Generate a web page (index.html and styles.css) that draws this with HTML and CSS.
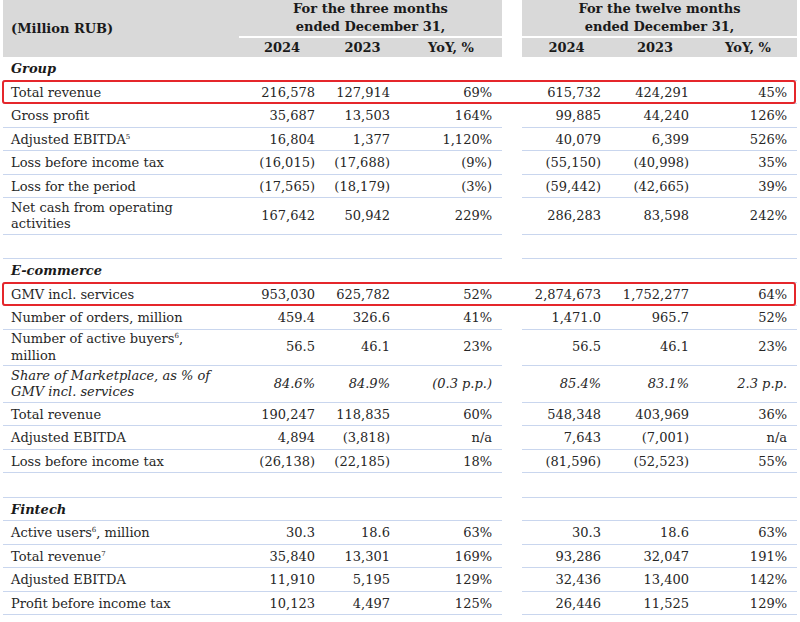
FILE: index.html
```html
<!DOCTYPE html>
<html>
<head>
<meta charset="utf-8">
<link rel="stylesheet" href="styles.css">
</head>
<body>
<table class="fin">
  <colgroup>
    <col class="c-label"><col class="c-a"><col class="c-b"><col class="c-c"><col class="c-gap"><col class="c-d"><col class="c-e"><col class="c-f">
  </colgroup>
  <thead>
    <tr class="h1">
      <th rowspan="2" class="unit">(Million RUB)</th>
      <th colspan="3" class="period">For the three months<br>ended December 31,</th>
      <th rowspan="2" class="gap"></th>
      <th colspan="3" class="period">For the twelve months<br>ended December 31,</th>
    </tr>
    <tr class="h2">
      <th>2024</th><th>2023</th><th>YoY, %</th>
      <th>2024</th><th>2023</th><th>YoY, %</th>
    </tr>
  </thead>
  <tbody>
    <tr class="section"><td>Group</td><td></td><td></td><td></td><td class="gap"></td><td></td><td></td><td></td></tr>
    <tr><td class="hl">Total revenue</td><td>216,578</td><td>127,914</td><td>69%</td><td class="gap"></td><td>615,732</td><td>424,291</td><td>45%</td></tr>
    <tr><td>Gross profit</td><td>35,687</td><td>13,503</td><td>164%</td><td class="gap"></td><td>99,885</td><td>44,240</td><td>126%</td></tr>
    <tr><td>Adjusted EBITDA<sup>5</sup></td><td>16,804</td><td>1,377</td><td>1,120%</td><td class="gap"></td><td>40,079</td><td>6,399</td><td>526%</td></tr>
    <tr><td>Loss before income tax</td><td>(16,015)</td><td>(17,688)</td><td>(9%)</td><td class="gap"></td><td>(55,150)</td><td>(40,998)</td><td>35%</td></tr>
    <tr><td>Loss for the period</td><td>(17,565)</td><td>(18,179)</td><td>(3%)</td><td class="gap"></td><td>(59,442)</td><td>(42,665)</td><td>39%</td></tr>
    <tr class="tall"><td>Net cash from operating<br>activities</td><td>167,642</td><td>50,942</td><td>229%</td><td class="gap"></td><td>286,283</td><td>83,598</td><td>242%</td></tr>
    <tr class="blank"><td></td><td></td><td></td><td></td><td class="gap"></td><td></td><td></td><td></td></tr>
    <tr class="section"><td>E-commerce</td><td></td><td></td><td></td><td class="gap"></td><td></td><td></td><td></td></tr>
    <tr><td class="hl">GMV incl. services</td><td>953,030</td><td>625,782</td><td>52%</td><td class="gap"></td><td>2,874,673</td><td>1,752,277</td><td>64%</td></tr>
    <tr><td>Number of orders, million</td><td>459.4</td><td>326.6</td><td>41%</td><td class="gap"></td><td>1,471.0</td><td>965.7</td><td>52%</td></tr>
    <tr class="tall"><td>Number of active buyers<sup>6</sup>,<br>million</td><td>56.5</td><td>46.1</td><td>23%</td><td class="gap"></td><td>56.5</td><td>46.1</td><td>23%</td></tr>
    <tr class="tall ital"><td>Share of Marketplace, as % of<br>GMV incl. services</td><td>84.6%</td><td>84.9%</td><td>(0.3 p.p.)</td><td class="gap"></td><td>85.4%</td><td>83.1%</td><td>2.3 p.p.</td></tr>
    <tr><td>Total revenue</td><td>190,247</td><td>118,835</td><td>60%</td><td class="gap"></td><td>548,348</td><td>403,969</td><td>36%</td></tr>
    <tr><td>Adjusted EBITDA</td><td>4,894</td><td>(3,818)</td><td>n/a</td><td class="gap"></td><td>7,643</td><td>(7,001)</td><td>n/a</td></tr>
    <tr><td>Loss before income tax</td><td>(26,138)</td><td>(22,185)</td><td>18%</td><td class="gap"></td><td>(81,596)</td><td>(52,523)</td><td>55%</td></tr>
    <tr class="blank"><td></td><td></td><td></td><td></td><td class="gap"></td><td></td><td></td><td></td></tr>
    <tr class="section"><td>Fintech</td><td></td><td></td><td></td><td class="gap"></td><td></td><td></td><td></td></tr>
    <tr><td>Active users<sup>6</sup>, million</td><td>30.3</td><td>18.6</td><td>63%</td><td class="gap"></td><td>30.3</td><td>18.6</td><td>63%</td></tr>
    <tr><td>Total revenue<sup>7</sup></td><td>35,840</td><td>13,301</td><td>169%</td><td class="gap"></td><td>93,286</td><td>32,047</td><td>191%</td></tr>
    <tr><td>Adjusted EBITDA</td><td>11,910</td><td>5,195</td><td>129%</td><td class="gap"></td><td>32,436</td><td>13,400</td><td>142%</td></tr>
    <tr><td>Profit before income tax</td><td>10,123</td><td>4,497</td><td>125%</td><td class="gap"></td><td>26,446</td><td>11,525</td><td>129%</td></tr>
  </tbody>
</table>
</body>
</html>
```
FILE: styles.css
```css
html, body {
  margin: 0;
  padding: 0;
  background: #ffffff;
}
body {
  font-family: "DejaVu Serif", "Liberation Serif", serif;
  font-size: 13px;
  color: #262626;
}
.fin {
  margin-left: 3px;
  width: 794px;
  table-layout: fixed;
  border-collapse: collapse;
  border-spacing: 0;
}
.c-label { width: 236px; }
.c-a { width: 86px; }
.c-b { width: 75px; }
.c-c { width: 102px; }
.c-gap { width: 20px; }
.c-d { width: 89px; }
.c-e { width: 88px; }
.c-f { width: 98px; }

thead th {
  background: #d9d9d9;
  color: #1a1a1a;
  font-weight: bold;
  text-align: center;
  padding: 0;
  line-height: 18px;
}
thead th.unit {
  text-align: left;
  padding-left: 8px;
  vertical-align: middle;
}
thead th.gap {
  background: #ffffff;
}
.h1 th.period {
  height: 34px;
  border-bottom: 2px solid #ffffff;
  vertical-align: middle;
}
.h2 th {
  height: 19px;
  vertical-align: middle;
}

tbody td {
  padding: 3px 10px 2.5px 8px;
  line-height: 17px;
  text-align: right;
  vertical-align: middle;
  border-bottom: 1px solid #c9d6ee;
  white-space: nowrap;
}
tbody td:first-child {
  text-align: left;
  padding-left: 8px;
}
tbody td.gap {
  border-bottom: none;
  padding: 0;
}
tbody tr.tall td {
  padding-top: 1.5px;
  padding-bottom: 1px;
  line-height: 16.5px;
}
tbody tr.section td {
  font-weight: bold;
  font-style: italic;
  color: #1a1a1a;
}
tbody tr.ital td {
  font-style: italic;
}
tbody tr.blank td {
  height: 18px;
}
sup {
  font-size: 7px;
  line-height: 0;
  vertical-align: 5px;
}
td.hl {
  position: relative;
}
td.hl::after {
  content: "";
  position: absolute;
  left: -1px;
  top: -1px;
  bottom: -1px;
  width: 794px;
  border: 2px solid #e5262b;
  border-radius: 3px;
  box-sizing: border-box;
  pointer-events: none;
}
```
